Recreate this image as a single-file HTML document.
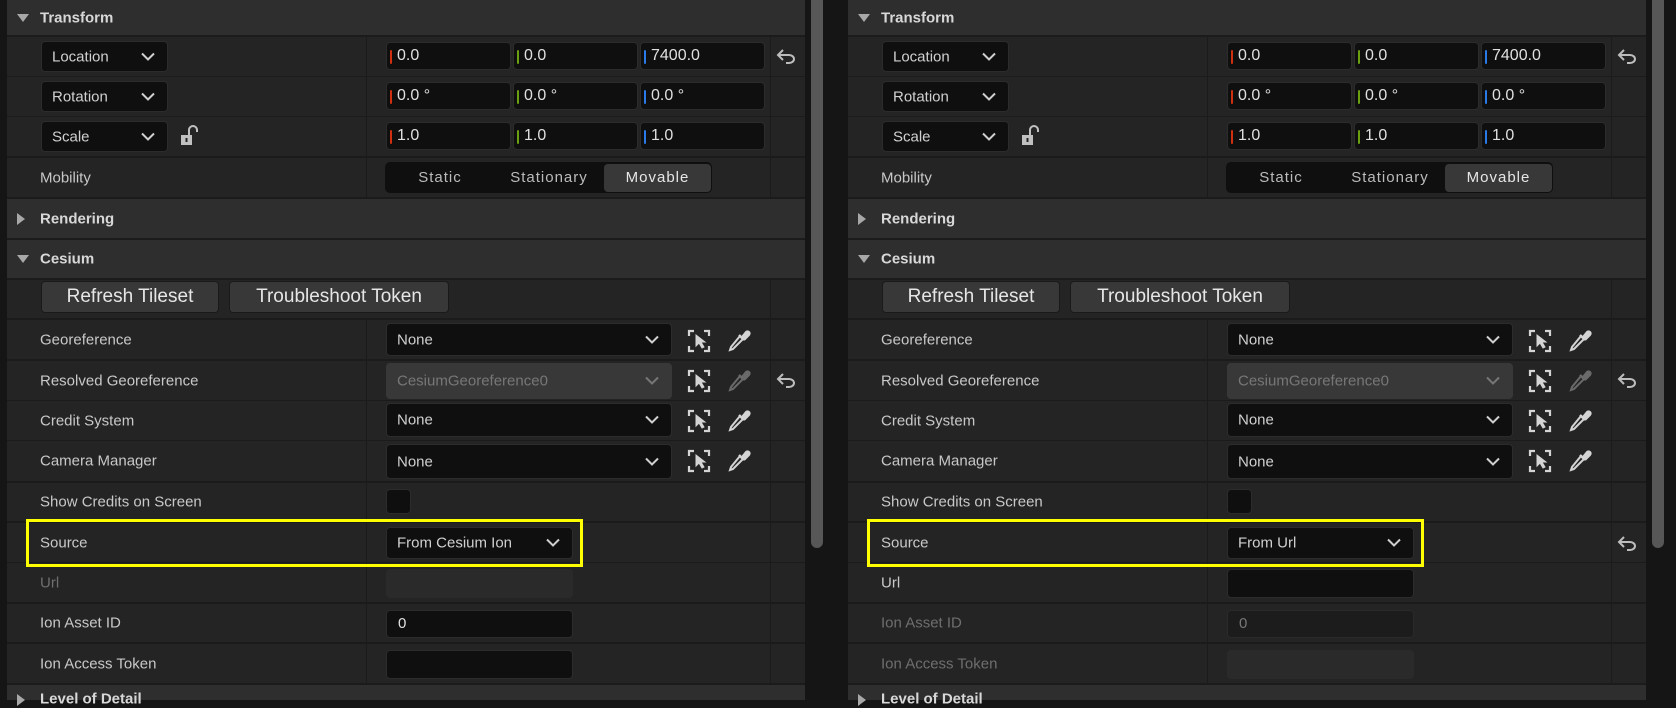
<!DOCTYPE html>
<html><head><meta charset="utf-8">
<style>
*{box-sizing:border-box;margin:0;padding:0}
body{width:1676px;height:700px;background:#151515;overflow:hidden;position:relative;font-family:"Liberation Sans",sans-serif;color:#c8c8c8;font-size:15px}
.pan{position:absolute;top:0;left:0;width:840px;height:700px}
.bg{position:absolute;left:7px;top:0;width:798px;height:700px;background:#1b1b1b}
.row{position:absolute;left:7px;width:798px;background:#242424}
.hdr{position:absolute;left:7px;width:798px;background:#2e2e2e;font-weight:bold;color:#d8d8d8}
.hdr span{position:absolute;left:33px;top:50%;transform:translateY(-50%)}
.tri{position:absolute;left:9px;top:50%;transform:translateY(-50%)}
.lbl{position:absolute;left:33px;top:50%;transform:translateY(-50%);white-space:nowrap}
.dis{color:#6e6e6e}
.colL{position:absolute;left:359px;top:0;width:1px;height:100%;background:#1b1b1b}
.colR{position:absolute;left:763px;top:0;width:1px;height:100%;background:#1b1b1b}
.a{position:absolute}
.box{position:absolute;background:#0f0f0f;border:1px solid #2c2c2c;border-radius:4px}
.combo{position:absolute;background:#0f0f0f;border:1px solid #2c2c2c;border-radius:4px;color:#d0d0d0}
.combo span{position:absolute;left:10px;top:50%;transform:translateY(-50%)}
.combo svg{position:absolute;right:12px;top:50%;transform:translateY(-50%)}
.vf span{position:absolute;left:10px;top:50%;transform:translateY(-50%);color:#e0e0e0;font-size:16px}
.vf i{position:absolute;left:3px;top:7px;width:2px;height:14px;border-radius:1px}
.btn{position:absolute;background:#383838;border:1px solid #1a1a1a;border-radius:4px;color:#e6e6e6;font-size:19px;text-align:center;line-height:30px}
</style></head><body>

<div class="pan" id="p1">
<div class="bg"></div>
<div class="hdr" style="top:0;height:35px"><svg class="tri" width="14" height="10"><path d="M1 1H13L7 9Z" fill="#a8a8a8"/></svg><span>Transform</span></div>
<div class="row" style="top:37px;height:39px"><div class="colL"></div><div class="colR"></div></div>
<div class="row" style="top:77px;height:39px"><div class="colL"></div><div class="colR"></div></div>
<div class="row" style="top:117px;height:39px"><div class="colL"></div><div class="colR"></div></div>
<div class="row" style="top:158px;height:39px"><div class="lbl">Mobility</div><div class="colL"></div><div class="colR"></div></div>
<div class="combo" style="left:41px;top:41px;width:127px;height:31px"><span>Location</span><svg width="14" height="9"><path d="M1 1L7 7L13 1" stroke="#d0d0d0" stroke-width="2" fill="none"/></svg></div>
<div class="combo" style="left:41px;top:81px;width:127px;height:31px"><span>Rotation</span><svg width="14" height="9"><path d="M1 1L7 7L13 1" stroke="#d0d0d0" stroke-width="2" fill="none"/></svg></div>
<div class="combo" style="left:41px;top:121px;width:127px;height:31px"><span>Scale</span><svg width="14" height="9"><path d="M1 1L7 7L13 1" stroke="#d0d0d0" stroke-width="2" fill="none"/></svg></div>
<svg class="a" style="left:180px;top:125px" width="22" height="22"><path d="M9 10V5a4 4 0 0 1 8 0v2" stroke="#c0c0c0" stroke-width="2" fill="none"/><rect x="1" y="10" width="11" height="10" fill="#c0c0c0"/><rect x="5.5" y="13" width="2" height="4" fill="#242424"/></svg>
<div class="box vf" style="left:386px;top:42px;width:125px;height:28px"><i style="background:#d0300f"></i><span>0.0</span></div>
<div class="box vf" style="left:513px;top:42px;width:125px;height:28px"><i style="background:#6aa00f"></i><span>0.0</span></div>
<div class="box vf" style="left:640px;top:42px;width:125px;height:28px"><i style="background:#2a7ae8"></i><span>7400.0</span></div>
<div class="box vf" style="left:386px;top:82px;width:125px;height:28px"><i style="background:#d0300f"></i><span>0.0 °</span></div>
<div class="box vf" style="left:513px;top:82px;width:125px;height:28px"><i style="background:#6aa00f"></i><span>0.0 °</span></div>
<div class="box vf" style="left:640px;top:82px;width:125px;height:28px"><i style="background:#2a7ae8"></i><span>0.0 °</span></div>
<div class="box vf" style="left:386px;top:122px;width:125px;height:28px"><i style="background:#d0300f"></i><span>1.0</span></div>
<div class="box vf" style="left:513px;top:122px;width:125px;height:28px"><i style="background:#6aa00f"></i><span>1.0</span></div>
<div class="box vf" style="left:640px;top:122px;width:125px;height:28px"><i style="background:#2a7ae8"></i><span>1.0</span></div>
<svg class="a" style="left:776px;top:47px" width="20" height="18"><path d="M7 3L2 8L7 13M2 8H13a5 4 0 0 1 0 8H10" stroke="#bdbdbd" stroke-width="2" fill="none"/></svg>
<div class="a" style="left:385px;top:162px;width:327px;height:31px;background:#0f0f0f;border-radius:5px"></div>
<div class="a" style="left:604px;top:164px;width:107px;height:28px;background:#383838;border-radius:4px"></div>
<div class="a" style="left:385px;top:169px;width:110px;text-align:center;letter-spacing:1px;color:#bbb">Static</div>
<div class="a" style="left:496px;top:169px;width:106px;text-align:center;letter-spacing:1px;color:#bbb">Stationary</div>
<div class="a" style="left:604px;top:169px;width:107px;text-align:center;letter-spacing:1px;color:#e6e6e6">Movable</div>
<div class="hdr" style="top:199px;height:39px"><svg class="tri" width="10" height="14"><path d="M1 1V13L9 7Z" fill="#a8a8a8"/></svg><span>Rendering</span></div>
<div class="hdr" style="top:240px;height:38px"><svg class="tri" width="14" height="10"><path d="M1 1H13L7 9Z" fill="#a8a8a8"/></svg><span>Cesium</span></div>
<div class="row" style="top:280px;height:38px"><div class="colR"></div></div>
<div class="btn" style="left:41px;top:281px;width:178px;height:32px">Refresh Tileset</div>
<div class="btn" style="left:229px;top:281px;width:220px;height:32px">Troubleshoot Token</div>
<div class="row" style="top:320px;height:39px"><div class="lbl">Georeference</div><div class="colL"></div><div class="colR"></div></div>
<div class="row" style="top:361px;height:39px"><div class="lbl">Resolved Georeference</div><div class="colL"></div><div class="colR"></div></div>
<div class="row" style="top:401px;height:39px"><div class="lbl">Credit System</div><div class="colL"></div><div class="colR"></div></div>
<div class="row" style="top:441px;height:40px"><div class="lbl">Camera Manager</div><div class="colL"></div><div class="colR"></div></div>
<div class="row" style="top:483px;height:38px"><div class="lbl">Show Credits on Screen</div><div class="colL"></div><div class="colR"></div></div>
<div class="row" style="top:523px;height:39px"><div class="lbl">Source</div><div class="colL"></div><div class="colR"></div></div>
<div class="row" style="top:563px;height:39px"><div class="lbl dis">Url</div><div class="colL"></div><div class="colR"></div></div>
<div class="row" style="top:604px;height:38px"><div class="lbl">Ion Asset ID</div><div class="colL"></div><div class="colR"></div></div>
<div class="row" style="top:644px;height:39px"><div class="lbl">Ion Access Token</div><div class="colL"></div><div class="colR"></div></div>
<div class="hdr" style="top:685px;height:15px"><svg class="tri" style="top:8px;transform:none" width="10" height="14"><path d="M1 1V13L9 7Z" fill="#a8a8a8"/></svg><span style="top:14px">Level of Detail</span></div>
<div class="combo" style="left:386px;top:323px;width:286px;height:33px"><span>None</span><svg width="14" height="9"><path d="M1 1L7 7L13 1" stroke="#d0d0d0" stroke-width="2" fill="none"/></svg></div>
<div class="combo" style="left:386px;top:363px;width:286px;height:36px;background:#383838;border-color:#383838;color:#777"><span>CesiumGeoreference0</span><svg width="14" height="9"><path d="M1 1L7 7L13 1" stroke="#777" stroke-width="2" fill="none"/></svg></div>
<div class="combo" style="left:386px;top:403px;width:286px;height:34px"><span>None</span><svg width="14" height="9"><path d="M1 1L7 7L13 1" stroke="#d0d0d0" stroke-width="2" fill="none"/></svg></div>
<div class="combo" style="left:386px;top:444px;width:286px;height:35px"><span>None</span><svg width="14" height="9"><path d="M1 1L7 7L13 1" stroke="#d0d0d0" stroke-width="2" fill="none"/></svg></div>
<div class="box" style="left:386px;top:489px;width:25px;height:25px"></div>
<div class="combo" style="left:386px;top:527px;width:187px;height:32px"><span>From Cesium Ion</span><svg width="14" height="9"><path d="M1 1L7 7L13 1" stroke="#d0d0d0" stroke-width="2" fill="none"/></svg></div>
<div class="box" style="left:386px;top:569px;width:187px;height:29px;background:#2a2a2a;border-color:#2a2a2a"></div>
<div class="box" style="left:386px;top:610px;width:187px;height:28px;color:#e0e0e0"><span style="position:absolute;left:11px;top:4px">0</span></div>
<div class="box" style="left:386px;top:650px;width:187px;height:29px"></div>
<svg class="a" style="left:687px;top:329px" width="24" height="24"><use href="#sel"/></svg>
<svg class="a" style="left:727px;top:328px" width="24" height="24"><use href="#drop"/></svg>
<svg class="a" style="left:687px;top:369px" width="24" height="24"><use href="#sel"/></svg>
<svg class="a" style="left:727px;top:368px" width="24" height="24" opacity="0.4"><use href="#drop"/></svg>
<svg class="a" style="left:687px;top:409px" width="24" height="24"><use href="#sel"/></svg>
<svg class="a" style="left:727px;top:408px" width="24" height="24"><use href="#drop"/></svg>
<svg class="a" style="left:687px;top:449px" width="24" height="24"><use href="#sel"/></svg>
<svg class="a" style="left:727px;top:448px" width="24" height="24"><use href="#drop"/></svg>
<svg class="a" style="left:776px;top:371px" width="20" height="18"><path d="M7 3L2 8L7 13M2 8H13a5 4 0 0 1 0 8H10" stroke="#bdbdbd" stroke-width="2" fill="none"/></svg>
<div class="a" style="left:26px;top:519px;width:557px;height:48px;border:3px solid #ffff00"></div>
<div class="a" style="left:811px;top:0;width:12px;height:548px;background:#575757;border-radius:0 0 6px 6px"></div>
</div>

<svg width="0" height="0" style="position:absolute">
<defs>
<g id="sel" fill="none" stroke="#d4d4d4" stroke-width="2.2">
<path d="M2 7V2H7M17 2H22V7M22 17V22H17M7 22H2V17"/>
<path d="M9 6V17L12 14L15 19L17 18L14 13H18Z" fill="#d4d4d4" stroke-width="1"/>
</g>
<g id="drop" fill="none" stroke="#d4d4d4" stroke-width="2">
<path d="M13 8L4 19L3 22L6 21L16 11" />
<path d="M12 7L17 12" stroke-width="2.5"/>
<path d="M15 9L19 4a2 2 0 0 1 3 3L17 12" fill="#d4d4d4"/>
</g>
</defs></svg>

<div class="pan" id="p2" style="left:841px">
<div class="bg"></div>
<div class="hdr" style="top:0;height:35px"><svg class="tri" width="14" height="10"><path d="M1 1H13L7 9Z" fill="#a8a8a8"/></svg><span>Transform</span></div>
<div class="row" style="top:37px;height:39px"><div class="colL"></div><div class="colR"></div></div>
<div class="row" style="top:77px;height:39px"><div class="colL"></div><div class="colR"></div></div>
<div class="row" style="top:117px;height:39px"><div class="colL"></div><div class="colR"></div></div>
<div class="row" style="top:158px;height:39px"><div class="lbl">Mobility</div><div class="colL"></div><div class="colR"></div></div>
<div class="combo" style="left:41px;top:41px;width:127px;height:31px"><span>Location</span><svg width="14" height="9"><path d="M1 1L7 7L13 1" stroke="#d0d0d0" stroke-width="2" fill="none"/></svg></div>
<div class="combo" style="left:41px;top:81px;width:127px;height:31px"><span>Rotation</span><svg width="14" height="9"><path d="M1 1L7 7L13 1" stroke="#d0d0d0" stroke-width="2" fill="none"/></svg></div>
<div class="combo" style="left:41px;top:121px;width:127px;height:31px"><span>Scale</span><svg width="14" height="9"><path d="M1 1L7 7L13 1" stroke="#d0d0d0" stroke-width="2" fill="none"/></svg></div>
<svg class="a" style="left:180px;top:125px" width="22" height="22"><path d="M9 10V5a4 4 0 0 1 8 0v2" stroke="#c0c0c0" stroke-width="2" fill="none"/><rect x="1" y="10" width="11" height="10" fill="#c0c0c0"/><rect x="5.5" y="13" width="2" height="4" fill="#242424"/></svg>
<div class="box vf" style="left:386px;top:42px;width:125px;height:28px"><i style="background:#d0300f"></i><span>0.0</span></div>
<div class="box vf" style="left:513px;top:42px;width:125px;height:28px"><i style="background:#6aa00f"></i><span>0.0</span></div>
<div class="box vf" style="left:640px;top:42px;width:125px;height:28px"><i style="background:#2a7ae8"></i><span>7400.0</span></div>
<div class="box vf" style="left:386px;top:82px;width:125px;height:28px"><i style="background:#d0300f"></i><span>0.0 °</span></div>
<div class="box vf" style="left:513px;top:82px;width:125px;height:28px"><i style="background:#6aa00f"></i><span>0.0 °</span></div>
<div class="box vf" style="left:640px;top:82px;width:125px;height:28px"><i style="background:#2a7ae8"></i><span>0.0 °</span></div>
<div class="box vf" style="left:386px;top:122px;width:125px;height:28px"><i style="background:#d0300f"></i><span>1.0</span></div>
<div class="box vf" style="left:513px;top:122px;width:125px;height:28px"><i style="background:#6aa00f"></i><span>1.0</span></div>
<div class="box vf" style="left:640px;top:122px;width:125px;height:28px"><i style="background:#2a7ae8"></i><span>1.0</span></div>
<svg class="a" style="left:776px;top:47px" width="20" height="18"><path d="M7 3L2 8L7 13M2 8H13a5 4 0 0 1 0 8H10" stroke="#bdbdbd" stroke-width="2" fill="none"/></svg>
<div class="a" style="left:385px;top:162px;width:327px;height:31px;background:#0f0f0f;border-radius:5px"></div>
<div class="a" style="left:604px;top:164px;width:107px;height:28px;background:#383838;border-radius:4px"></div>
<div class="a" style="left:385px;top:169px;width:110px;text-align:center;letter-spacing:1px;color:#bbb">Static</div>
<div class="a" style="left:496px;top:169px;width:106px;text-align:center;letter-spacing:1px;color:#bbb">Stationary</div>
<div class="a" style="left:604px;top:169px;width:107px;text-align:center;letter-spacing:1px;color:#e6e6e6">Movable</div>
<div class="hdr" style="top:199px;height:39px"><svg class="tri" width="10" height="14"><path d="M1 1V13L9 7Z" fill="#a8a8a8"/></svg><span>Rendering</span></div>
<div class="hdr" style="top:240px;height:38px"><svg class="tri" width="14" height="10"><path d="M1 1H13L7 9Z" fill="#a8a8a8"/></svg><span>Cesium</span></div>
<div class="row" style="top:280px;height:38px"><div class="colR"></div></div>
<div class="btn" style="left:41px;top:281px;width:178px;height:32px">Refresh Tileset</div>
<div class="btn" style="left:229px;top:281px;width:220px;height:32px">Troubleshoot Token</div>
<div class="row" style="top:320px;height:39px"><div class="lbl">Georeference</div><div class="colL"></div><div class="colR"></div></div>
<div class="row" style="top:361px;height:39px"><div class="lbl">Resolved Georeference</div><div class="colL"></div><div class="colR"></div></div>
<div class="row" style="top:401px;height:39px"><div class="lbl">Credit System</div><div class="colL"></div><div class="colR"></div></div>
<div class="row" style="top:441px;height:40px"><div class="lbl">Camera Manager</div><div class="colL"></div><div class="colR"></div></div>
<div class="row" style="top:483px;height:38px"><div class="lbl">Show Credits on Screen</div><div class="colL"></div><div class="colR"></div></div>
<div class="row" style="top:523px;height:39px"><div class="lbl">Source</div><div class="colL"></div><div class="colR"></div></div>
<div class="row" style="top:563px;height:39px"><div class="lbl">Url</div><div class="colL"></div><div class="colR"></div></div>
<div class="row" style="top:604px;height:38px"><div class="lbl dis">Ion Asset ID</div><div class="colL"></div><div class="colR"></div></div>
<div class="row" style="top:644px;height:39px"><div class="lbl dis">Ion Access Token</div><div class="colL"></div><div class="colR"></div></div>
<div class="hdr" style="top:685px;height:15px"><svg class="tri" style="top:8px;transform:none" width="10" height="14"><path d="M1 1V13L9 7Z" fill="#a8a8a8"/></svg><span style="top:14px">Level of Detail</span></div>
<div class="combo" style="left:386px;top:323px;width:286px;height:33px"><span>None</span><svg width="14" height="9"><path d="M1 1L7 7L13 1" stroke="#d0d0d0" stroke-width="2" fill="none"/></svg></div>
<div class="combo" style="left:386px;top:363px;width:286px;height:36px;background:#383838;border-color:#383838;color:#777"><span>CesiumGeoreference0</span><svg width="14" height="9"><path d="M1 1L7 7L13 1" stroke="#777" stroke-width="2" fill="none"/></svg></div>
<div class="combo" style="left:386px;top:403px;width:286px;height:34px"><span>None</span><svg width="14" height="9"><path d="M1 1L7 7L13 1" stroke="#d0d0d0" stroke-width="2" fill="none"/></svg></div>
<div class="combo" style="left:386px;top:444px;width:286px;height:35px"><span>None</span><svg width="14" height="9"><path d="M1 1L7 7L13 1" stroke="#d0d0d0" stroke-width="2" fill="none"/></svg></div>
<div class="box" style="left:386px;top:489px;width:25px;height:25px"></div>
<div class="combo" style="left:386px;top:527px;width:187px;height:32px"><span>From Url</span><svg width="14" height="9"><path d="M1 1L7 7L13 1" stroke="#d0d0d0" stroke-width="2" fill="none"/></svg></div>
<div class="box" style="left:386px;top:569px;width:187px;height:29px"></div>
<div class="box" style="left:386px;top:610px;width:187px;height:28px;background:#1c1c1c;border-color:#2a2a2a;color:#777"><span style="position:absolute;left:11px;top:4px">0</span></div>
<div class="box" style="left:386px;top:650px;width:187px;height:29px;background:#2a2a2a;border-color:#2a2a2a"></div>
<svg class="a" style="left:687px;top:329px" width="24" height="24"><use href="#sel"/></svg>
<svg class="a" style="left:727px;top:328px" width="24" height="24"><use href="#drop"/></svg>
<svg class="a" style="left:687px;top:369px" width="24" height="24"><use href="#sel"/></svg>
<svg class="a" style="left:727px;top:368px" width="24" height="24" opacity="0.4"><use href="#drop"/></svg>
<svg class="a" style="left:687px;top:409px" width="24" height="24"><use href="#sel"/></svg>
<svg class="a" style="left:727px;top:408px" width="24" height="24"><use href="#drop"/></svg>
<svg class="a" style="left:687px;top:449px" width="24" height="24"><use href="#sel"/></svg>
<svg class="a" style="left:727px;top:448px" width="24" height="24"><use href="#drop"/></svg>
<svg class="a" style="left:776px;top:371px" width="20" height="18"><path d="M7 3L2 8L7 13M2 8H13a5 4 0 0 1 0 8H10" stroke="#bdbdbd" stroke-width="2" fill="none"/></svg>
<svg class="a" style="left:776px;top:534px" width="20" height="18"><path d="M7 3L2 8L7 13M2 8H13a5 4 0 0 1 0 8H10" stroke="#bdbdbd" stroke-width="2" fill="none"/></svg>
<div class="a" style="left:26px;top:519px;width:557px;height:48px;border:3px solid #ffff00"></div>
<div class="a" style="left:811px;top:0;width:12px;height:548px;background:#575757;border-radius:0 0 6px 6px"></div>
</div>
</body></html>
